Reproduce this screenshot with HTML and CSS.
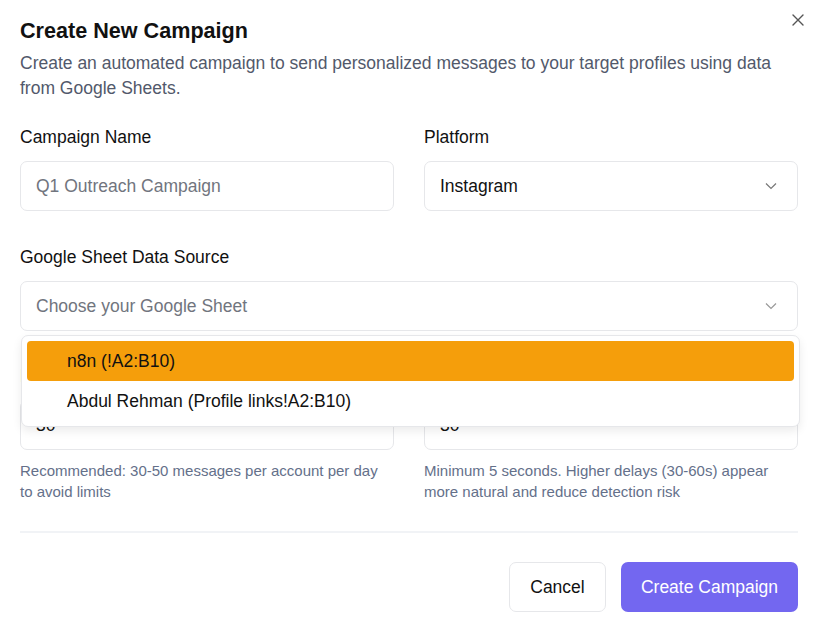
FILE: index.html
```html
<!DOCTYPE html>
<html>
<head>
<meta charset="utf-8">
<link rel="stylesheet" href="styles.css">
</head>
<body>
<div class="dialog">
  <button class="close" aria-label="Close">
    <svg width="14" height="14" viewBox="0 0 14 14"><path d="M2 2L12 12M12 2L2 12" stroke="#555" stroke-width="1.4" stroke-linecap="round"/></svg>
  </button>
  <h1 class="title">Create New Campaign</h1>
  <p class="desc">Create an automated campaign to send personalized messages to your target profiles using data from Google Sheets.</p>

  <div class="grid">
    <div class="field">
      <label class="label">Campaign Name</label>
      <div class="input placeholder">Q1 Outreach Campaign</div>
    </div>
    <div class="field">
      <label class="label">Platform</label>
      <div class="input select">Instagram<svg class="chev" width="12" height="8" viewBox="0 0 12 8"><path d="M1 1.5L6 6.5L11 1.5" fill="none" stroke="#777" stroke-width="1.2"/></svg></div>
    </div>
  </div>

  <div class="field sheet">
    <label class="label">Google Sheet Data Source</label>
    <div class="input select placeholder">Choose your Google Sheet<svg class="chev" width="12" height="8" viewBox="0 0 12 8"><path d="M1 1.5L6 6.5L11 1.5" fill="none" stroke="#999" stroke-width="1.2"/></svg></div>
    <div class="menu">
      <div class="option active">n8n (!A2:B10)</div>
      <div class="option">Abdul Rehman (Profile links!A2:B10)</div>
    </div>
  </div>

  <div class="grid">
    <div class="field">
      <label class="label">Daily Message Limit</label>
      <div class="input">30</div>
      <p class="help">Recommended: 30-50 messages per account per day to avoid limits</p>
    </div>
    <div class="field">
      <label class="label">Delay Between Messages (seconds)</label>
      <div class="input">30</div>
      <p class="help">Minimum 5 seconds. Higher delays (30-60s) appear more natural and reduce detection risk</p>
    </div>
  </div>

  <div class="divider"></div>

  <div class="actions">
    <button class="btn cancel">Cancel</button>
    <button class="btn primary">Create Campaign</button>
  </div>
</div>
</body>
</html>
```
FILE: styles.css
```css
* { box-sizing: border-box; }
html, body { margin: 0; padding: 0; background: #fff; }
body { font-family: "Liberation Sans", Arial, sans-serif; color: #111; }
.dialog { position: relative; padding: 17px 17px 0 20px; width: 815px; }
.close { position: absolute; top: 13px; right: 10px; background: none; border: 0; padding: 0; width: 14px; height: 14px; cursor: pointer; }
.close svg { display: block; }
.title { margin: 0; font-size: 21.6px; font-weight: 700; line-height: 28px; color: #111; }
.desc { margin: 6px 0 0; font-size: 17.5px; line-height: 25px; color: #52596b; max-width: 770px; }
.grid { display: grid; grid-template-columns: 1fr 1fr; column-gap: 30px; }
.field { display: flex; flex-direction: column; }
.desc + .grid { margin-top: 25px; }
.label { font-size: 17.5px; line-height: 22px; color: #111; margin-bottom: 13px; }
.input { height: 50px; border: 1px solid #e6e7ea; border-radius: 7px; padding: 0 15px; display: flex; align-items: center; font-size: 17.5px; color: #111; }
.placeholder { color: #71757e; }
.select { justify-content: space-between; }
.chev { margin-right: 5px; }
.sheet { margin-top: 35px; position: relative; }
.menu { position: absolute; left: 1px; right: -2px; top: 89px; background: #fff; border: 1px solid #e6e7ea; border-radius: 7px; box-shadow: 0 4px 10px rgba(0,0,0,0.08); padding: 5px; z-index: 2; }
.option { height: 40px; border-radius: 4px; display: flex; align-items: center; padding-left: 40px; font-size: 17.5px; color: #111; }
.option.active { background: #f59e0b; }
.sheet + .grid { margin-top: 34px; }
.help { margin: 10px 0 0; font-size: 15px; line-height: 21px; color: #64708a; }
.divider { height: 2px; background: #f1f3f6; margin-top: 29px; }
.actions { display: flex; justify-content: flex-end; gap: 15px; margin-top: 29px; }
.btn { height: 50px; border-radius: 7px; font-family: inherit; font-size: 17.5px; padding: 0 10px; cursor: pointer; }
.cancel { background: #fff; border: 1px solid #e6e7ea; color: #111; width: 97px; }
.primary { background: #7367f0; border: 0; color: #fff; width: 177px; }
```
